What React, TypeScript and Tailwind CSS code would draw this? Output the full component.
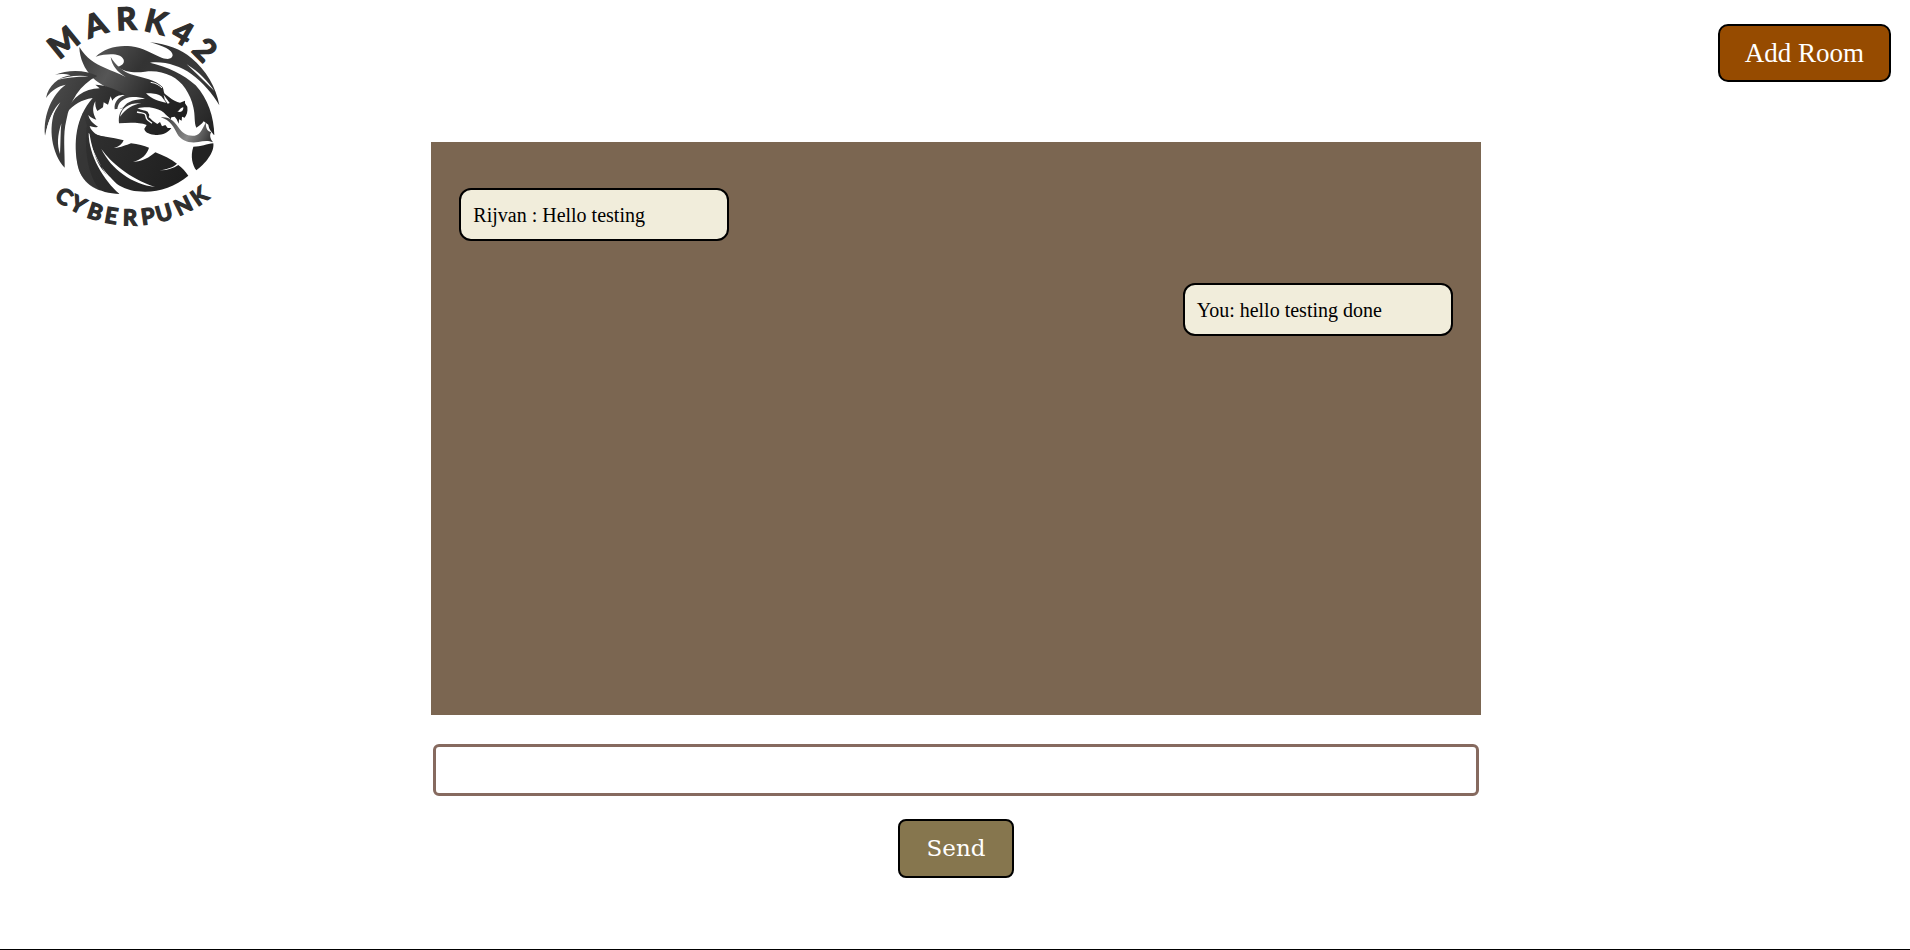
import { useState } from "react";
import type { FormEvent } from "react";

type ArcTextProps = {
  text: string;
  advances: number[];
  angles: number[];
  cx: number;
  cy: number;
  radius: number;
  size: number;
  below?: boolean;
};

// Sets each letter upright on a circle; `below` puts the letters under the centre.
function ArcText({ text, advances, angles, cx, cy, radius, size, below = false }: ArcTextProps) {
  const letters = angles.map((deg, i) => {
    const a = (deg * Math.PI) / 180;
    const turn = below ? -a : a;
    const half = (advances[i] * size) / 2;
    const px = cx + radius * Math.sin(a);
    const py = below ? cy + radius * Math.cos(a) : cy - radius * Math.cos(a);
    return {
      x: Math.round(px - half * Math.cos(turn)),
      y: Math.round(py - half * Math.sin(turn)),
      r: below ? -deg : deg,
    };
  });
  return (
    <text
      x={letters.map((l) => l.x).join(" ")}
      y={letters.map((l) => l.y).join(" ")}
      rotate={letters.map((l) => l.r).join(" ")}
      fontSize={size}
      strokeWidth={4}
      className="fill-[#2e2e2e] stroke-[#2e2e2e] font-bold font-[Lato,sans-serif]"
    >
      {text}
    </text>
  );
}

function Logo() {
  return (
    <svg
      viewBox="0 0 630 720"
      className="h-60 w-[210px] overflow-visible"
      role="img"
      aria-label="Mark42 Cyberpunk"
    >
      <defs>
        <linearGradient id="ink" gradientUnits="userSpaceOnUse" x1="50" y1="250" x2="540" y2="480">
          <stop offset="0" stopColor="#4d4d4d" />
          <stop offset="0.35" stopColor="#2f2f2f" />
          <stop offset="1" stopColor="#1c1c1c" />
        </linearGradient>
        <linearGradient id="horn" gradientUnits="userSpaceOnUse" x1="150" y1="150" x2="460" y2="330">
          <stop offset="0" stopColor="#3a3a3a" />
          <stop offset="0.3" stopColor="#565656" />
          <stop offset="0.7" stopColor="#2a2a2a" />
          <stop offset="1" stopColor="#202020" />
        </linearGradient>
        <linearGradient id="wing" gradientUnits="userSpaceOnUse" x1="200" y1="150" x2="560" y2="420">
          <stop offset="0" stopColor="#555555" />
          <stop offset="0.3" stopColor="#333333" />
          <stop offset="0.65" stopColor="#3a3a3a" />
          <stop offset="1" stopColor="#1e1e1e" />
        </linearGradient>
        <linearGradient id="flame" gradientUnits="userSpaceOnUse" x1="400" y1="350" x2="550" y2="420">
          <stop offset="0" stopColor="#3a3a3a" />
          <stop offset="0.55" stopColor="#8a8a8a" />
          <stop offset="1" stopColor="#2c2c2c" />
        </linearGradient>
      </defs>

      <ArcText
        text="MARK42"
        advances={[0.93, 0.7, 0.63, 0.66, 0.58, 0.58]}
        angles={[-39, -19, -2, 14, 30, 45]}
        cx={300}
        cy={374}
        radius={284}
        size={94}
      />
      <ArcText
        text="CYBERPUNK"
        advances={[0.66, 0.64, 0.65, 0.58, 0.63, 0.61, 0.73, 0.76, 0.66]}
        angles={[-35, -27, -18, -10, -1, 8, 16, 26, 35]}
        cx={305}
        cy={300}
        radius={376}
        size={66}
        below
      />

      {/* wing and tail */}
      <path
        fill="url(#wing)"
        d="M197 170C222 146 262 134 303 139C340 144 362 160 388 170C408 179 426 180 428 166C429 151 398 137 360 127C412 132 452 148 484 174C528 209 559 264 568 316C548 281 518 247 484 222C448 197 404 183 360 188C412 200 462 223 497 256C534 296 552 352 553 406C545 395 537 390 535 374L521 364C515 372 508 378 499 383C492 370 496 345 490 322C482 282 456 243 424 228C398 216 374 211 345 215C310 220 280 214 262 200C276 198 284 189 281 179C274 161 238 158 197 170Z"
      />
      <path fill="#fff" d="M470 193C507 215 535 246 553 273C535 256 507 228 470 193Z" />

      {/* horns and head */}
      <path
        fill="url(#horn)"
        d="M148 141C170 176 193 190 224 203C244 212 264 219 287 231C263 216 246 199 242 171C257 196 278 213 302 223C338 233 378 240 398 262C402 270 400 276 404 281L418 292C428 300 440 307 450 308L465 302L465 310L472 320C474 335 470 345 464 353L456 350L455 362L447 358L446 371L440 358L434 350L424 352L422 358C416 350 408 345 402 338C392 329 378 325 366 323C350 321 338 322 322 325C335 331 345 331 353 335L358 345L356 352C362 356 366 362 372 365L382 372L390 366L396 379L406 375L413 384L424 384C412 401 392 407 372 404C355 402 343 395 343 386L350 375C327 367 299 368 267 370C265 350 269 336 280 325L254 328C251 307 266 291 284 286C251 273 214 257 188 233C163 207 149 175 148 141Z"
      />
      <path fill="#fff" d="M348 280C364 278 386 282 394 289L409 308C389 305 364 297 348 280Z" />
      <path fill="#fff" d="M401 284L419 309L413 311L404 298Z" />
      <path fill="none" stroke="#fff" strokeWidth="3" d="M362 247C377 249 387 255 396 264" />
      <path fill="#fff" d="M262 330C262 307 282 292 308 291C324 291 336 293 345 297C318 297 292 303 280 322C276 325 268 327 262 330Z" />
      <path fill="#fff" d="M270 350C276 322 298 308 334 310C310 314 288 325 270 350Z" />
      <path fill="none" stroke="#fff" strokeWidth="4" d="M321 336C334 340 342 338 346 343C350 350 346 354 353 360L366 370" />
      <path fill="#fff" d="M442 334C450 332 450 323 460 322C461 332 454 339 442 334Z" />

      {/* flame */}
      <path
        fill="url(#flame)"
        d="M392 352C419 349 433 364 445 382C456 399 474 410 494 407C513 404 517 385 528 367C526 386 534 396 544 396C538 405 540 415 549 427C535 421 520 423 505 426C479 431 453 422 442 402C432 383 421 360 392 352Z"
      />
      <path fill="#222" d="M490 440C513 440 531 432 550 430C554 458 525 492 499 511C488 496 480 470 490 440Z" />

      {/* left feathers */}
      <path
        fill="url(#ink)"
        d="M202 228C166 208 112 209 75 224C91 221 109 222 122 226C84 231 55 258 48 294C65 270 85 258 107 254C67 283 39 342 45 407C54 366 64 342 77 326C53 382 65 461 104 503C105 454 98 403 109 361C119 304 149 254 202 228Z"
      />
      <path fill="#fff" d="M94 370C82 407 81 435 90 462C92 429 91 397 94 370Z" />
      <path fill="#fff" d="M91 307C69 326 52 370 48 401C60 361 72 337 91 307Z" />
      <path fill="#fff" d="M81 240C107 230 142 224 181 230C144 229 111 234 81 240Z" />

      {/* neck */}
      <path
        fill="url(#ink)"
        d="M110 337C126 291 162 266 209 265L196 254C223 254 252 265 286 284C266 284 254 290 247 302L242 289L234 314L221 307L219 322L202 333C197 325 195 315 196 304C186 323 188 341 199 359C191 358 182 352 175 345C179 361 189 371 204 380C196 383 187 381 179 378C184 396 202 408 226 411C204 414 188 409 176 399C176 466 222 543 269 582C207 579 157 553 144 500C129 429 137 352 188 294C153 299 131 315 110 337Z"
      />
      <path fill="#3d3d3d" opacity="0.5" d="M171 375C161 444 175 534 212 572C176 560 153 535 144 500C133 447 137 388 159 338Z" />

      {/* chest */}
      <path
        fill="url(#ink)"
        d="M178 398C207 410 247 410 281 421C277 432 267 440 252 444C274 443 288 435 303 430C324 433 342 437 357 443C351 464 334 479 309 486C338 485 358 472 376 457C400 466 422 477 441 491C430 502 411 508 389 511C410 512 429 505 445 495C456 503 467 515 475 527C430 564 377 580 323 574C266 567 236 535 211 500C196 476 184 437 178 398Z"
      />
      <path fill="#fff" d="M214 447C244 488 294 533 375 561C306 553 244 508 214 447Z" />
      <path fill="#fff" d="M179 425C194 464 222 521 269 582C285 577 263 554 237 528C209 498 191 464 179 425Z" />
    </svg>
  );
}

type Message = { author: string; text: string; own: boolean };

const initialMessages: Message[] = [
  { author: "Rijvan : ", text: "Hello testing", own: false },
  { author: "You: ", text: "hello testing done", own: true },
];

export default function App() {
  const [messages, setMessages] = useState(initialMessages);
  const [draft, setDraft] = useState("");

  const send = (event: FormEvent) => {
    event.preventDefault();
    const text = draft.trim();
    if (!text) return;
    setMessages([...messages, { author: "You: ", text, own: true }]);
    setDraft("");
  };

  return (
    <div className="grid min-h-screen grid-cols-[1fr_55%_1fr] items-start border-b border-black bg-white pl-0.5 font-['Liberation_Serif',serif] text-black">
      <header className="flex pl-7">
        <Logo />
      </header>

      <main className="flex flex-col pt-[142px]">
        <section
          aria-label="Messages"
          className="flex h-[573px] flex-col gap-[42px] overflow-y-auto bg-[#7b6651] px-7 pt-[46px] pb-6"
        >
          {messages.map((message, index) => (
            <p
              key={index}
              className={`w-[270px] shrink-0 rounded-xl border-2 border-black bg-[#f1eddb] px-3 pt-[13px] pb-[11px] text-[20px] leading-[25px] ${
                message.own ? "self-end" : "self-start"
              }`}
            >
              {message.author}
              {message.text}
            </p>
          ))}
        </section>

        <form onSubmit={send} className="flex flex-col items-center px-0.5 pt-[29px]">
          <input
            type="text"
            aria-label="Message"
            value={draft}
            onChange={(event) => setDraft(event.target.value)}
            className="h-[52px] w-full rounded-md border-3 border-[#866a5f] bg-white px-3 text-[20px] outline-none"
          />
          <button
            type="submit"
            className="mt-[23px] h-[59px] rounded-lg border-2 border-black bg-[#86764e] px-[27px] font-['DejaVu_Serif',serif] text-[23px] text-white"
          >
            Send
          </button>
        </form>
      </main>

      <div className="flex justify-end pt-6 pr-[19px]">
        <button
          type="button"
          className="h-[58px] rounded-[10px] border-2 border-black bg-[#964b00] px-[25px] text-[27px] text-white"
        >
          Add Room
        </button>
      </div>
    </div>
  );
}
